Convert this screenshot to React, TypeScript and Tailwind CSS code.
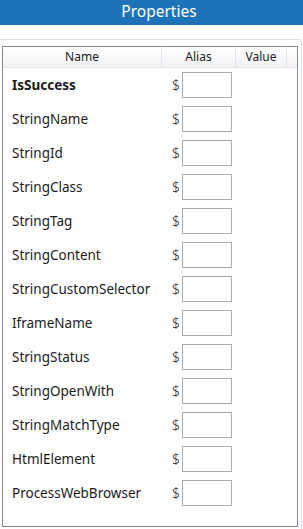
import React from 'react';

const rows: { name: string; bold?: boolean }[] = [
  { name: 'IsSuccess', bold: true },
  { name: 'StringName' },
  { name: 'StringId' },
  { name: 'StringClass' },
  { name: 'StringTag' },
  { name: 'StringContent' },
  { name: 'StringCustomSelector' },
  { name: 'IframeName' },
  { name: 'StringStatus' },
  { name: 'StringOpenWith' },
  { name: 'StringMatchType' },
  { name: 'HtmlElement' },
  { name: 'ProcessWebBrowser' },
];

export default function App() {
  return (
    <div
      className="w-[303px] h-[529px] bg-white overflow-hidden text-[#1b1b1b]"
      style={{ fontFamily: '"Noto Sans", "Open Sans", Arial, sans-serif' }}
    >
      {/* Title bar */}
      <div className="h-[25px] bg-[#1e72b8] text-white text-[15.5px] leading-[22px] flex justify-center pl-[15px]">
        Properties
      </div>

      {/* Outer panel */}
      <div className="mt-[14px] w-[302px] h-[490px] border-t border-r border-[#d9e1ea] rounded-tr-[3px]">
        {/* Grid */}
        <div className="ml-[2px] mt-[6px] w-[296px] h-[481px] border border-[#858a8f]">
          {/* Header row */}
          <div className="flex h-[21px] border-b border-[#e3e5e8] bg-gradient-to-b from-white to-[#f2f3f5] text-[12px] leading-[20px]">
            <div className="w-[159px] border-r border-[#e3e5e8] text-center">Name</div>
            <div className="w-[74px] border-r border-[#e3e5e8] text-center">Alias</div>
            <div className="w-[51px] border-r border-[#e3e5e8] text-center">Value</div>
            <div className="flex-1" />
          </div>

          {rows.map((r) => (
            <div key={r.name} className="flex h-[34px] items-center">
              <div
                className={`w-[159px] pl-[9px] text-[13.5px] leading-[18px] -mt-[1px] ${r.bold ? 'font-bold' : ''}`}
              >
                {r.name}
              </div>
              <div className="w-[74px] flex items-center justify-end pr-[4px]">
                <span className="text-[14px] leading-[18px] -mt-[1px] mr-[2px] font-light">$</span>
                <div className="w-[50px] h-[26px] border border-[#acacac] bg-white" />
              </div>
            </div>
          ))}
        </div>
      </div>
    </div>
  );
}
